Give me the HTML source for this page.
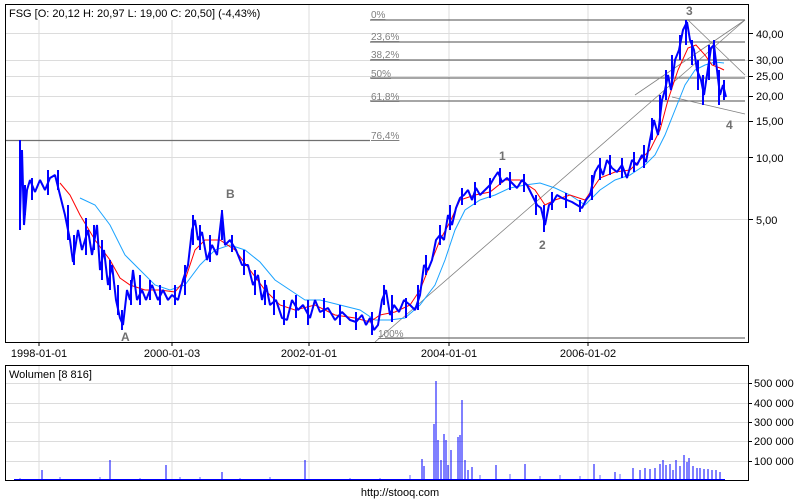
<!DOCTYPE html><html><head><style>
body{margin:0;background:#fff;width:800px;height:500px;overflow:hidden}
svg{display:block;font-family:"Liberation Sans",sans-serif}
</style></head><body>
<svg width="800" height="500" viewBox="0 0 800 500">
<rect width="800" height="500" fill="#fff"/>
<g stroke="#dcdcdc" stroke-width="1">
<line x1="39" y1="20" x2="39" y2="342"/><line x1="172" y1="20" x2="172" y2="342"/><line x1="309" y1="4" x2="309" y2="342"/><line x1="449" y1="4" x2="449" y2="342"/><line x1="588" y1="4" x2="588" y2="342"/>
<line x1="5" y1="33.5" x2="748" y2="33.5"/><line x1="5" y1="60.5" x2="748" y2="60.5"/><line x1="5" y1="76.5" x2="748" y2="76.5"/><line x1="5" y1="96.5" x2="748" y2="96.5"/><line x1="5" y1="121.5" x2="748" y2="121.5"/><line x1="5" y1="157.5" x2="748" y2="157.5"/><line x1="5" y1="219.5" x2="748" y2="219.5"/>
<line x1="39" y1="365" x2="39" y2="480"/><line x1="172" y1="365" x2="172" y2="480"/><line x1="309" y1="365" x2="309" y2="480"/><line x1="449" y1="365" x2="449" y2="480"/><line x1="588" y1="365" x2="588" y2="480"/>
<line x1="5" y1="383.5" x2="748" y2="383.5"/><line x1="5" y1="403.5" x2="748" y2="403.5"/><line x1="5" y1="422.5" x2="748" y2="422.5"/><line x1="5" y1="441.5" x2="748" y2="441.5"/><line x1="5" y1="461.5" x2="748" y2="461.5"/>
</g>
<g stroke="#707070" stroke-width="1.2">
<line x1="370" y1="20" x2="745" y2="20"/><line x1="370" y1="42" x2="745" y2="42"/><line x1="370" y1="60" x2="745" y2="60"/><line x1="370" y1="78" x2="745" y2="78"/><line x1="370" y1="101" x2="745" y2="101"/><line x1="5" y1="140.5" x2="370" y2="140.5"/><line x1="385" y1="338" x2="745" y2="338"/>
</g>
<g stroke="#808080" stroke-width="0.8" fill="none">
<line x1="375" y1="342" x2="745" y2="20"/><line x1="688" y1="20" x2="745" y2="75"/><line x1="672" y1="97" x2="745" y2="114"/><line x1="635" y1="95" x2="745" y2="20"/>
</g>
<g font-size="10" fill="#808080" text-decoration="underline">
<text x="371" y="18">0%</text><text x="371" y="40">23,6%</text><text x="371" y="58">38,2%</text><text x="371" y="77">50%</text><text x="371" y="100">61,8%</text><text x="371" y="139">76,4%</text><text x="378" y="337">100%</text>
</g>
<polyline fill="none" stroke="#1aa3ff" stroke-width="1" points="80,198 95,205 110,225 125,255 140,270 155,285 170,290 185,285 200,265 215,250 230,245 245,250 260,262 275,280 290,290 305,300 320,300 340,305 360,310 375,320 390,320 405,318 420,305 435,285 445,260 455,230 465,210 480,200 495,195 510,188 525,185 540,183 555,188 570,195 585,205 600,190 615,180 630,175 645,165 655,155 665,135 675,110 685,85 695,70 705,65 715,62 724,63"/>
<polyline fill="none" stroke="#ff0000" stroke-width="1" points="60,183 70,195 80,215 95,240 110,260 120,278 130,285 145,290 160,290 175,292 185,280 195,250 205,240 220,240 235,250 250,270 265,290 280,305 295,310 315,305 335,315 355,318 370,322 380,315 395,312 410,305 420,290 430,265 440,240 450,222 460,200 475,195 490,192 505,180 520,180 535,190 545,205 555,200 570,195 585,200 600,178 615,172 630,170 640,160 650,150 660,130 668,100 678,70 688,48 696,45 705,55 712,65 720,68 724,70"/>
<polyline fill="none" stroke="#0000ff" stroke-width="2" stroke-linejoin="bevel" points="20,215 22,150 24,225 27,190 30,180 35,192 40,180 45,190 50,178 55,175 60,195 65,215 70,240 73,262 78,230 82,250 88,230 92,255 97,225 100,270 104,250 108,285 112,265 116,300 120,318 123,325 127,290 130,300 133,270 137,300 142,290 146,300 152,285 158,300 163,290 168,300 172,295 178,300 183,280 188,265 192,230 195,220 198,240 202,232 207,260 212,245 217,255 222,212 225,245 230,240 236,250 242,265 248,265 253,285 258,275 262,300 266,285 270,305 276,300 282,318 287,320 292,300 298,310 303,305 310,318 315,300 320,312 328,308 335,320 342,312 350,320 356,322 362,315 366,325 370,318 374,330 378,325 382,300 386,290 390,315 394,305 399,312 404,300 410,305 415,310 420,295 424,265 428,270 432,260 436,240 440,235 444,240 448,215 452,225 456,208 460,198 464,195 468,190 472,200 476,188 480,195 485,190 490,185 494,178 498,172 502,182 507,178 512,183 517,188 522,180 527,185 532,195 537,205 541,208 545,225 549,205 553,202 557,195 562,198 567,200 572,202 577,205 582,208 586,200 590,195 595,172 599,165 603,175 607,160 612,168 617,172 622,165 627,178 632,160 637,165 642,155 646,162 650,140 654,120 658,135 662,100 665,90 668,75 671,90 675,60 679,50 683,30 687,22 690,40 694,50 697,70 701,80 704,95 707,75 711,48 714,45 717,70 720,95 723,85 726,97"/>
<path stroke="#0000ff" stroke-width="2" fill="none" d="M20,140V230M25,185V215M32,178V200M48,170V195M58,170V190M68,205V240M74,235V265M86,218V255M94,225V250M102,240V280M110,260V290M118,285V315M122,310V330M131,280V305M140,275V305M150,280V300M160,285V305M175,285V305M185,265V295M193,215V245M200,225V250M210,235V262M222,210V240M232,235V252M244,250V275M255,270V295M265,280V305M274,290V315M284,300V325M296,295V318M308,300V325M324,298V318M340,305V325M356,312V330M372,312V335M384,285V305M392,295V322M406,298V318M418,285V310M426,255V275M440,225V245M450,205V230M462,188V205M475,182V205M490,178V198M500,168V185M510,172V190M524,174V192M536,195V215M544,205V232M552,192V210M566,193V208M580,200V212M592,175V200M600,158V180M610,155V175M622,158V178M634,152V172M644,145V168M652,118V140M660,95V125M666,70V100M672,55V85M680,35V60M686,20V45M692,40V65M698,60V90M703,75V105M709,45V80M714,40V65M719,70V105M724,80V100"/>
<g font-size="12" font-weight="bold" fill="#707070">
<text x="121" y="341">A</text><text x="226" y="198">B</text><text x="499" y="160">1</text><text x="539" y="249">2</text><text x="686" y="15">3</text><text x="726" y="129">4</text>
</g>
<rect x="5.5" y="4.5" width="743" height="338" fill="none" stroke="#000" stroke-width="1"/>
<rect x="5.5" y="365.5" width="743" height="115" fill="none" stroke="#000" stroke-width="1"/>
<g stroke="#000"><line x1="748" y1="33.5" x2="753" y2="33.5"/><line x1="748" y1="60.5" x2="753" y2="60.5"/><line x1="748" y1="76.5" x2="753" y2="76.5"/><line x1="748" y1="96.5" x2="753" y2="96.5"/><line x1="748" y1="121.5" x2="753" y2="121.5"/><line x1="748" y1="157.5" x2="753" y2="157.5"/><line x1="748" y1="219.5" x2="753" y2="219.5"/>
<line x1="39" y1="342" x2="39" y2="346"/><line x1="172" y1="342" x2="172" y2="346"/><line x1="309" y1="342" x2="309" y2="346"/><line x1="449" y1="342" x2="449" y2="346"/><line x1="588" y1="342" x2="588" y2="346"/>
<line x1="748" y1="383.5" x2="752" y2="383.5"/><line x1="748" y1="403.5" x2="752" y2="403.5"/><line x1="748" y1="422.5" x2="752" y2="422.5"/><line x1="748" y1="441.5" x2="752" y2="441.5"/><line x1="748" y1="461.5" x2="752" y2="461.5"/></g>
<g font-size="11" fill="#000">
<text x="9" y="17">FSG [O: 20,12  H: 20,97  L: 19,00  C: 20,50] (-4,43%)</text>
<text x="756" y="38">40,00</text><text x="756" y="64">30,00</text><text x="756" y="80">25,00</text><text x="756" y="100">20,00</text><text x="756" y="125">15,00</text><text x="756" y="162">10,00</text><text x="756" y="224">5,00</text>
<text x="39" y="357" text-anchor="middle">1998-01-01</text><text x="172" y="357" text-anchor="middle">2000-01-03</text><text x="309" y="357" text-anchor="middle">2002-01-01</text><text x="449" y="357" text-anchor="middle">2004-01-01</text><text x="588" y="357" text-anchor="middle">2006-01-02</text>
<text x="9" y="378">Wolumen [8 816]</text>
<text x="754" y="387">500 000</text><text x="754" y="407">400 000</text><text x="754" y="426">300 000</text><text x="754" y="445">200 000</text><text x="754" y="465">100 000</text>
<text x="400" y="496" text-anchor="middle">http://stooq.com</text>
</g>
<path stroke="#0000ff" stroke-width="1" fill="none" d="M42,480V470M110,480V460M166,480V465M222,480V472M305,480V460M422,480V459M424,480V466M434,480V424M436,480V381M438,480V440M441,480V460M444,480V434M446,480V440M448,480V465M451,480V450M458,480V437M460,480V435M462,480V400M465,480V460M468,480V470M472,480V467M496,480V465M525,480V464M594,480V464M615,480V472M633,480V468M640,480V470M645,480V468M650,480V469M655,480V468M660,480V464M663,480V460M666,480V465M670,480V464M673,480V470M676,480V460M680,480V466M684,480V455M687,480V462M689,480V458M693,480V466M697,480V468M700,480V468M704,480V469M708,480V469M712,480V470M716,480V470M720,480V472"/>
<path stroke="#0000ff" stroke-width="0.6" fill="none" d="M20,480V478M60,480V477M100,480V477M140,480V478M180,480V477M200,480V477M240,480V478M270,480V477M350,480V478M380,480V478M410,480V475M480,480V475M510,480V474M540,480V476M560,480V475M580,480V476M600,480V475M620,480V474"/>
<line x1="14" y1="479.5" x2="725" y2="479.5" stroke="#0000ff" stroke-width="1"/>
</svg>
</body></html>
